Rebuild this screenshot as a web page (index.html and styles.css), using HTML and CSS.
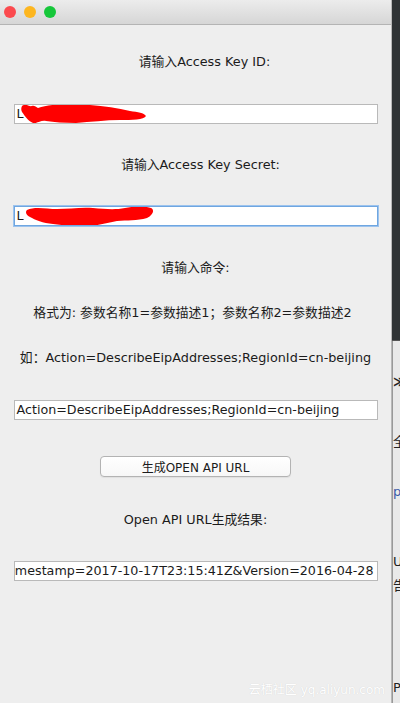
FILE: index.html
```html
<!DOCTYPE html>
<html>
<head>
<meta charset="utf-8">
<link rel="stylesheet" href="styles.css">
</head>
<body>
<div class="screen">
  <div class="window">
    <div class="titlebar">
      <span class="light red"></span>
      <span class="light yellow"></span>
      <span class="light green"></span>
    </div>
    <div class="content">
      <div class="label l1">请输入Access Key ID:</div>
      <div class="field f1">
        <span class="ftext">L</span>
        <svg class="scribble s1" width="132" height="22" viewBox="0 0 132 22">
          <path d="M2 3 C6 0 9 4 12 3 C14 2 16 4 18 5 C30 1 50 0 70 2 C84 3 98 5 110 8 C118 9 124 10 126 13 C124 17 112 17 100 17 C86 17 70 19 56 20 C44 20 34 19 26 18 C20 17 17 21 13 20 C8 18 5 13 2 9 C1 7 1 5 2 3 Z" fill="#ff0000"/>
        </svg>
      </div>
      <div class="label l2">请输入Access Key Secret:</div>
      <div class="field f2 focused">
        <span class="ftext">L</span>
        <svg class="scribble s2" width="132" height="22" viewBox="0 0 132 22">
          <path d="M2 4 C10 0 22 3 32 3 C44 3 56 1 68 2 C80 3 90 4 100 2 C110 0 120 0 126 2 C130 4 128 9 122 12 C112 15 102 14 92 15 C82 17 72 20 60 20 C48 21 38 19 28 18 C18 17 10 14 5 11 C1 9 0 6 2 4 Z" fill="#ff0000"/>
        </svg>
      </div>
      <div class="label l3">请输入命令:</div>
      <div class="label l4">格式为: 参数名称1=参数描述1；参数名称2=参数描述2</div>
      <div class="label l5">如：Action=DescribeEipAddresses;RegionId=cn-beijing</div>
      <div class="field f3"><span class="ftext">Action=DescribeEipAddresses;RegionId=cn-beijing</span></div>
      <button class="btn">生成OPEN API URL</button>
      <div class="label l6">Open API URL生成结果:</div>
      <div class="field f4 endalign"><span class="ftext">Signature=xxx&amp;SignatureVersion=1.0&amp;Timestamp=2017-10-17T23:15:41Z&amp;Version=2016-04-28</span></div>
    </div>
    <div class="watermark">云栖社区 yq.aliyun.com</div>
  </div>
  <div class="side">
    <div class="side-dark"></div>
    <div class="side-light">
      <span class="g g1">≫</span>
      <span class="g g2">全</span>
      <span class="g g4 blue">p</span>
      <span class="g g6">U</span>
      <span class="g g7">告</span>
      <span class="g g9">P</span>
    </div>
  </div>
</div>
</body>
</html>
```
FILE: styles.css
```css
html, body {
  margin: 0;
  padding: 0;
  width: 400px;
  height: 703px;
  overflow: hidden;
  background: #efefef;
}
.screen {
  display: flex;
  width: 400px;
  height: 703px;
  font-family: "DejaVu Sans", "Noto Sans CJK SC", sans-serif;
  font-size: 13px;
  color: #1b1b1b;
}
.window {
  position: relative;
  width: 392px;
  height: 703px;
  background: #eeeeee;
  display: flex;
  flex-direction: column;
  border-right: 1px solid #b8b8b8;
  box-sizing: border-box;
}
.titlebar {
  height: 24px;
  border-bottom: 1px solid #b4b4b4;
  background: linear-gradient(#ececec, #d6d6d6);
  display: flex;
  align-items: center;
  gap: 8px;
  padding-left: 4px;
  border-top: 3px solid #e6e6e6;
  box-sizing: content-box;
  margin-top: -3px;
}
.light {
  width: 12px;
  height: 12px;
  border-radius: 50%;
  display: block;
}
.red { background: #fb4a4e; }
.yellow { background: #fdb61f; }
.green { background: #16c73a; }
.content {
  display: flex;
  flex-direction: column;
  align-items: center;
  padding: 0 14px;
}
.label {
  height: 16px;
  line-height: 16px;
  white-space: nowrap;
  text-align: center;
  width: 100%;
  font-size: 12.8px;
}
.l1 { margin-top: 29px; padding-left: 18px; box-sizing: border-box; }
.l2 { margin-top: 33px; padding-left: 10px; box-sizing: border-box; }
.l3 { margin-top: 34px; }
.l4 { margin-top: 29px; padding-right: 6px; box-sizing: border-box; }
.l5 { margin-top: 29px; }
.l6 { margin-top: 35px; }
.field {
  position: relative;
  width: 364px;
  height: 20px;
  box-sizing: border-box;
  background: #ffffff;
  border: 1px solid #b9b9b9;
  display: flex;
  align-items: center;
  padding-left: 2px;
  overflow: hidden;
  line-height: 18px;
  white-space: nowrap;
}
.f1 { margin-top: 34px; }
.f2 { margin-top: 33px; }
.f3 { margin-top: 34px; }
.f4 { margin-top: 33px; }
.focused {
  border: 1px solid #6fa6e0;
  box-shadow: 0 0 0 1px #9cc3ee;
}
.endalign {
  justify-content: flex-end;
  padding-right: 3px;
}
.ftext {
  flex: none;
  font-size: 12.7px;
}
.scribble {
  position: absolute;
  left: 5px;
  top: -2px;
}
.s2 { left: 10px; top: -1px; }
.btn {
  margin-top: 36px;
  width: 191px;
  height: 21px;
  background: linear-gradient(#ffffff, #f7f7f7);
  border: 1px solid #b3b3b3;
  border-radius: 4px;
  font-family: "DejaVu Sans", "Noto Sans CJK SC", sans-serif;
  font-size: 12px;
  color: #1b1b1b;
  padding: 0;
  box-shadow: 0 1px 1px rgba(0,0,0,0.06);
}
.watermark {
  position: absolute;
  right: 6px;
  bottom: 6px;
  font-family: "DejaVu Sans", "Noto Sans CJK SC", sans-serif;
  font-size: 12px;
  color: #ffffff;
  text-shadow: 0 0 1px rgba(0,0,0,0.15);
}
.side {
  width: 8px;
  height: 703px;
  display: flex;
  flex-direction: column;
}
.side-dark {
  height: 340px;
  background: #2f3335;
  border-bottom: 1px solid #555;
}
.side-light {
  position: relative;
  flex: 1;
  background: #e9e9e9;
  border-left: 1px solid #999;
  overflow: hidden;
}
.g {
  position: absolute;
  left: 0;
  font-size: 13px;
  color: #222;
  line-height: 14px;
}
.g1 { top: 34px; font-weight: bold; }
.g2 { top: 94px; }
.g4 { top: 144px; }
.blue { color: #3a5ba8; }
.g6 { top: 214px; }
.g7 { top: 238px; }
.g9 { top: 340px; }
```
